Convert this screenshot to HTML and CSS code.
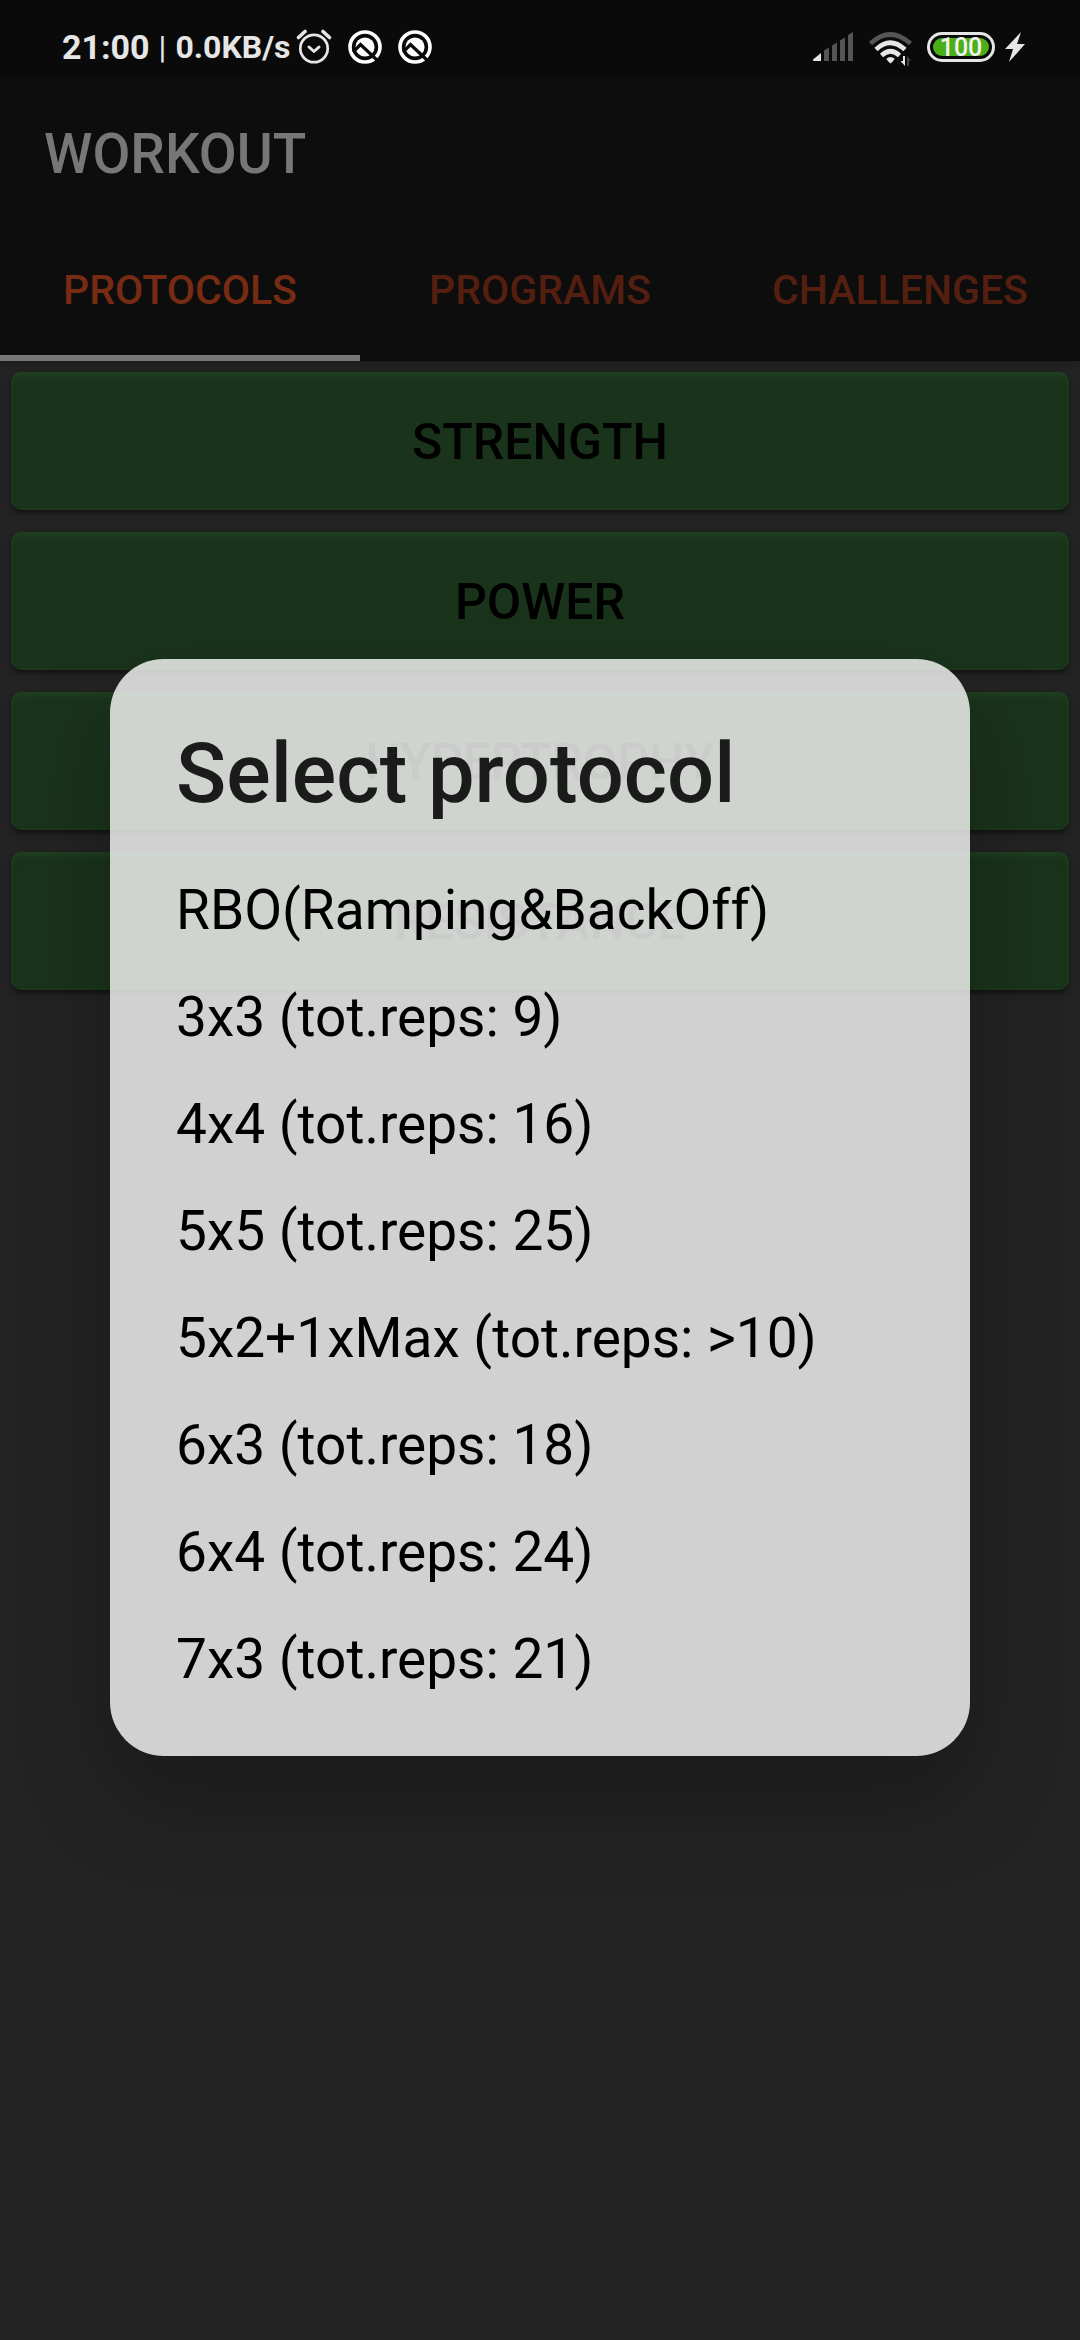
FILE: index.html
```html
<!DOCTYPE html>
<html lang="en">
<head>
<meta charset="utf-8">
<meta name="viewport" content="width=device-width, initial-scale=1">
<title>Workout</title>
<link rel="stylesheet" href="styles.css">
</head>
<body>
<div class="status">
  <div class="status-left">
    <span class="clock">21:00</span>
    <span class="divider">|</span>
    <span class="speed">0.0KB/s</span>
    <svg class="alarm" viewBox="0 0 36 36" width="36" height="36" aria-hidden="true">
      <g fill="none" stroke="#e6e6e6" stroke-linecap="round" stroke-linejoin="round">
        <circle cx="18" cy="19.500" r="13.700" stroke-width="2.700"/>
        <path d="M13 18l5 4.500 5-4.500" stroke-width="3"/>
        <path d="M2.500 8.500l6.500-6M33.500 8.500l-6.500-6" stroke-width="3.600"/>
      </g>
    </svg>
    <svg class="note-icon" viewBox="0 0 34 34" width="34" height="34" aria-hidden="true">
      <circle cx="17" cy="17" r="15" fill="none" stroke="#fff" stroke-width="3.600"/>
      <circle cx="17" cy="17" r="9.600" fill="#fff"/>
      <path d="M5 22l7.500-7.500L30 31" fill="none" stroke="#0a0a0a" stroke-width="3.200"/>
    </svg>
    <svg class="note-icon" viewBox="0 0 34 34" width="34" height="34" aria-hidden="true">
      <circle cx="17" cy="17" r="15" fill="none" stroke="#fff" stroke-width="3.600"/>
      <circle cx="17" cy="17" r="9.600" fill="#fff"/>
      <path d="M5 22l7.500-7.500L30 31" fill="none" stroke="#0a0a0a" stroke-width="3.200"/>
    </svg>
  </div>
  <div class="status-right">
    <svg class="signal" viewBox="0 0 41 30" width="41" height="30" aria-hidden="true">
      <path d="M0 27.500L8 21v8H1q-1 0-1-1.500z" fill="#e6e6e6"/>
      <path d="M11 18.500l5-3V29h-5zM19 13.500l5-3V29h-5zM27 8.500l5-3V29h-5zM35 3l5-3v29h-5z" fill="#555"/>
    </svg>
    <svg class="wifi" viewBox="0 0 43 34" width="43" height="34" aria-hidden="true">
      <g fill="none" stroke-width="4.600">
        <path d="M1.500 11.500Q21 -6.500 41.500 11.500" stroke="#555"/>
        <path d="M7 17.500Q21 4 36 17.500" stroke="#e6e6e6"/>
        <path d="M12.500 23.500Q21.500 15 30.500 23.500" stroke="#e6e6e6"/>
      </g>
      <path d="M17.500 26.500Q21.500 23.500 25.500 26.500Q25.500 28 21.500 31.500Q17.500 28 17.500 26.500z" fill="#e6e6e6"/>
      <path d="M36 24v10l-4.500-5H34v-5z" fill="#e6e6e6"/>
      <path d="M38 34V24l4 5h-2v5z" fill="#444"/>
    </svg>
    <div class="battery"><span class="battery-level">100</span></div>
    <svg class="bolt" viewBox="0 0 20 30" width="20" height="30" aria-hidden="true">
      <path d="M16 0L0 17h8L4 30 20 12h-8z" fill="#e6e6e6"/>
    </svg>
  </div>
</div>

<header class="appbar">
  <h1 class="title">WORKOUT</h1>
  <nav class="tabs">
    <button class="tab tab-active" type="button">PROTOCOLS</button>
    <button class="tab" type="button">PROGRAMS</button>
    <button class="tab" type="button">CHALLENGES</button>
  </nav>
</header>

<main class="goals">
  <button class="goal" type="button">STRENGTH</button>
  <button class="goal" type="button">POWER</button>
  <button class="goal" type="button">HYPERTROPHY</button>
  <button class="goal" type="button">RESISTANCE</button>
</main>

<div class="overlay">
  <section class="sheet" role="dialog" aria-labelledby="sheet-title">
    <h2 class="sheet-title" id="sheet-title">Select protocol</h2>
    <ul class="options">
      <li><button class="option" type="button">RBO(Ramping&amp;BackOff)</button></li>
      <li><button class="option" type="button">3x3 (tot.reps: 9)</button></li>
      <li><button class="option" type="button">4x4 (tot.reps: 16)</button></li>
      <li><button class="option" type="button">5x5 (tot.reps: 25)</button></li>
      <li><button class="option" type="button">5x2+1xMax (tot.reps: &gt;10)</button></li>
      <li><button class="option" type="button">6x3 (tot.reps: 18)</button></li>
      <li><button class="option" type="button">6x4 (tot.reps: 24)</button></li>
      <li><button class="option" type="button">7x3 (tot.reps: 21)</button></li>
    </ul>
  </section>
</div>
</body>
</html>
```
FILE: styles.css
```css
* {
  box-sizing: border-box;
}

body {
  margin: 0;
  min-height: 100vh;
  background: #232323;
  font-family: Roboto, "Noto Sans", sans-serif;
}

button {
  margin: 0;
  padding: 0;
  border: 0;
  background: none;
  font: inherit;
}

/* Status bar */
.status {
  display: flex;
  justify-content: space-between;
  align-items: center;
  height: 75px;
  padding: 19px 55px 0 62px;
  background: #0a0a0a;
  color: #e6e6e6;
  line-height: 40px;
}

.status-left,
.status-right {
  display: flex;
  align-items: center;
}

.clock {
  font-size: 34px;
  font-weight: 700;
}

.divider {
  margin: 0 9px;
  font-size: 32px;
}

.speed {
  font-size: 32px;
  font-weight: 700;
}

.alarm {
  margin-left: 5px;
}

.note-icon {
  margin-left: 16px;
}

.wifi {
  margin: 4px 15px 0;
}

.battery {
  width: 68px;
  height: 30px;
  padding: 3px;
  border: 3px solid #e6e6e6;
  border-radius: 15px;
}

.battery-level {
  display: block;
  height: 18px;
  border-radius: 9px;
  background: #4caf17;
  color: #f2f2f2;
  font-size: 25px;
  font-weight: 500;
  line-height: 19px;
  text-align: center;
}

.bolt {
  margin-left: 10px;
}

/* App bar */
.appbar {
  background: #0d0d0d;
  box-shadow: 0 2px 8px rgba(0, 0, 0, 0.25);
}

.title {
  margin: 0;
  padding: 0 44px;
  color: #777;
  font-size: 55px;
  font-weight: 500;
  line-height: 158px;
}

.tabs {
  display: grid;
  grid-template-columns: repeat(3, 1fr);
}

.tab {
  height: 128px;
  padding-bottom: 8px;
  border-bottom: 6px solid transparent;
  color: #541f10;
  font-size: 41px;
  font-weight: 500;
  line-height: 48px;
}

.tab-active {
  border-bottom-color: #777;
  color: #772b13;
}

/* Training goals */
.goals {
  display: grid;
  gap: 22px;
  padding: 11px;
}

.goal {
  height: 138px;
  padding-top: 2px;
  border-radius: 11px;
  background: #1a331b;
  box-shadow: inset 0 6px 6px -2px #214222, inset 0 0 3px #214222, 0 3px 5px rgba(0, 0, 0, 0.5);
  color: #000;
  font-size: 50px;
  font-weight: 500;
  line-height: 60px;
}

/* Protocol picker */
.overlay {
  position: fixed;
  inset: 75px 0 0;
  display: grid;
  align-items: center;
  padding: 0 110px;
}

.sheet {
  padding: 66px 66px 43px;
  border-radius: 54px;
  background: rgba(248, 248, 248, 0.82);
  box-shadow: 0 44px 90px rgba(0, 0, 0, 0.25);
}

.sheet-title {
  margin: 0;
  color: #1b1b1b;
  font-size: 83px;
  font-weight: 500;
  line-height: 98px;
}

.options {
  display: grid;
  margin: 0;
  padding: 34px 0 0;
  list-style: none;
}

.option {
  width: 100%;
  color: #000;
  font-size: 55px;
  line-height: 107px;
  text-align: left;
}
```
